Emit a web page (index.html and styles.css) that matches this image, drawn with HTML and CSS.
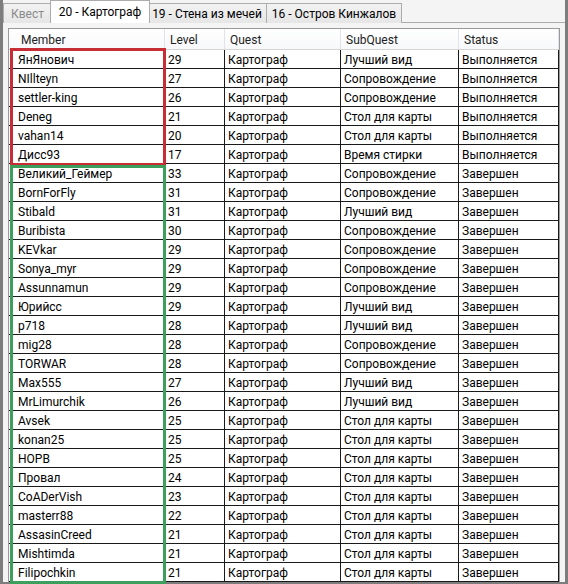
FILE: index.html
```html
<!DOCTYPE html>
<html lang="ru">
<head>
<meta charset="utf-8">
<title>Квест</title>
<link rel="stylesheet" href="styles.css">
</head>
<body>
<div class="window">
  <div class="tabs">
    <div class="tab disabled">Квест</div>
    <div class="tab active">20 - Картограф</div>
    <div class="tab t19">19 - Стена из мечей</div>
    <div class="tab t16">16 - Остров Кинжалов</div>
  </div>
  <div class="panel">
    <div class="grid">
      <div class="row head">
        <div class="cell first">Member</div>
        <div class="cell">Level</div>
        <div class="cell">Quest</div>
        <div class="cell">SubQuest</div>
        <div class="cell">Status</div>
      </div>
      <div class="body">
        <div class="row"><div class="cell first">ЯнЯнович</div><div class="cell">29</div><div class="cell">Картограф</div><div class="cell">Лучший вид</div><div class="cell">Выполняется</div></div>
        <div class="row"><div class="cell first">NIllteyn</div><div class="cell">27</div><div class="cell">Картограф</div><div class="cell">Сопровождение</div><div class="cell">Выполняется</div></div>
        <div class="row"><div class="cell first">settler-king</div><div class="cell">26</div><div class="cell">Картограф</div><div class="cell">Сопровождение</div><div class="cell">Выполняется</div></div>
        <div class="row"><div class="cell first">Deneg</div><div class="cell">21</div><div class="cell">Картограф</div><div class="cell">Стол для карты</div><div class="cell">Выполняется</div></div>
        <div class="row"><div class="cell first">vahan14</div><div class="cell">20</div><div class="cell">Картограф</div><div class="cell">Стол для карты</div><div class="cell">Выполняется</div></div>
        <div class="row"><div class="cell first">Дисс93</div><div class="cell">17</div><div class="cell">Картограф</div><div class="cell">Время стирки</div><div class="cell">Выполняется</div></div>
        <div class="row"><div class="cell first">Великий_Геймер</div><div class="cell">33</div><div class="cell">Картограф</div><div class="cell">Сопровождение</div><div class="cell">Завершен</div></div>
        <div class="row"><div class="cell first">BornForFly</div><div class="cell">31</div><div class="cell">Картограф</div><div class="cell">Сопровождение</div><div class="cell">Завершен</div></div>
        <div class="row"><div class="cell first">Stibald</div><div class="cell">31</div><div class="cell">Картограф</div><div class="cell">Лучший вид</div><div class="cell">Завершен</div></div>
        <div class="row"><div class="cell first">Buribista</div><div class="cell">30</div><div class="cell">Картограф</div><div class="cell">Сопровождение</div><div class="cell">Завершен</div></div>
        <div class="row"><div class="cell first">KEVkar</div><div class="cell">29</div><div class="cell">Картограф</div><div class="cell">Сопровождение</div><div class="cell">Завершен</div></div>
        <div class="row"><div class="cell first">Sonya_myr</div><div class="cell">29</div><div class="cell">Картограф</div><div class="cell">Сопровождение</div><div class="cell">Завершен</div></div>
        <div class="row"><div class="cell first">Assunnamun</div><div class="cell">29</div><div class="cell">Картограф</div><div class="cell">Сопровождение</div><div class="cell">Завершен</div></div>
        <div class="row"><div class="cell first">Юрийсс</div><div class="cell">29</div><div class="cell">Картограф</div><div class="cell">Лучший вид</div><div class="cell">Завершен</div></div>
        <div class="row"><div class="cell first">p718</div><div class="cell">28</div><div class="cell">Картограф</div><div class="cell">Лучший вид</div><div class="cell">Завершен</div></div>
        <div class="row"><div class="cell first">mig28</div><div class="cell">28</div><div class="cell">Картограф</div><div class="cell">Сопровождение</div><div class="cell">Завершен</div></div>
        <div class="row"><div class="cell first">TORWAR</div><div class="cell">28</div><div class="cell">Картограф</div><div class="cell">Сопровождение</div><div class="cell">Завершен</div></div>
        <div class="row"><div class="cell first">Max555</div><div class="cell">27</div><div class="cell">Картограф</div><div class="cell">Лучший вид</div><div class="cell">Завершен</div></div>
        <div class="row"><div class="cell first">MrLimurchik</div><div class="cell">26</div><div class="cell">Картограф</div><div class="cell">Лучший вид</div><div class="cell">Завершен</div></div>
        <div class="row"><div class="cell first">Avsek</div><div class="cell">25</div><div class="cell">Картограф</div><div class="cell">Стол для карты</div><div class="cell">Завершен</div></div>
        <div class="row"><div class="cell first">konan25</div><div class="cell">25</div><div class="cell">Картограф</div><div class="cell">Стол для карты</div><div class="cell">Завершен</div></div>
        <div class="row"><div class="cell first">HOPB</div><div class="cell">25</div><div class="cell">Картограф</div><div class="cell">Стол для карты</div><div class="cell">Завершен</div></div>
        <div class="row"><div class="cell first">Провал</div><div class="cell">24</div><div class="cell">Картограф</div><div class="cell">Стол для карты</div><div class="cell">Завершен</div></div>
        <div class="row"><div class="cell first">CoADerVish</div><div class="cell">23</div><div class="cell">Картограф</div><div class="cell">Стол для карты</div><div class="cell">Завершен</div></div>
        <div class="row"><div class="cell first">masterr88</div><div class="cell">22</div><div class="cell">Картограф</div><div class="cell">Стол для карты</div><div class="cell">Завершен</div></div>
        <div class="row"><div class="cell first">AssasinCreed</div><div class="cell">21</div><div class="cell">Картограф</div><div class="cell">Стол для карты</div><div class="cell">Завершен</div></div>
        <div class="row"><div class="cell first">Mishtimda</div><div class="cell">21</div><div class="cell">Картограф</div><div class="cell">Стол для карты</div><div class="cell">Завершен</div></div>
        <div class="row"><div class="cell first">Filipochkin</div><div class="cell">21</div><div class="cell">Картограф</div><div class="cell">Стол для карты</div><div class="cell">Завершен</div></div>
        <div class="mark red"></div>
        <div class="mark green"></div>
      </div>
    </div>
  </div>
</div>
</body>
</html>
```
FILE: styles.css
```css
* { box-sizing: border-box; }
html, body { margin: 0; padding: 0; }
body {
  width: 568px;
  height: 584px;
  overflow: hidden;
  background: #7d7d7d;
  font-family: Roboto, "Noto Sans", sans-serif;
  font-size: 12px;
  color: #000;
}
.window {
  margin-left: 3px;
  width: 562px;
  height: 582px;
  background: #f4f4f4;
  display: flex;
  flex-direction: column;
}
.tabs {
  display: flex;
  align-items: flex-end;
  height: 23px;
  position: relative;
  z-index: 1;
  font-size: 12px;
}
.tab {
  flex: none;
  height: 20px;
  line-height: 21px;
  text-align: center;
  border: 1px solid #acacac;
  border-bottom: none;
  border-left: none;
  background: linear-gradient(#f2f2f2, #e6e6e6);
  white-space: nowrap;
  overflow: hidden;
}
.tab:first-child { border-left: 1px solid #acacac; }
.tab.disabled { color: #8a8a8a; width: 49px; }
.tab.active {
  height: 23px;
  line-height: 23px;
  width: 100px;
  background: #fff;
  margin-left: -2px;
  margin-right: -2px;
  border-left: 1px solid #acacac;
  position: relative;
}
.tab.t19 { width: 119px; }
.tab.t16 { width: 135px; }
.panel {
  flex: 1;
  border-top: 1px solid #acacac;
  padding: 5px 0 0 5px;
  margin-top: -1px;
  background: #f4f4f4;
}
.grid {
  width: 552px;
  border: 1px solid #9a9a9a;
  border-bottom: none;
  background: #fff;
}
.row {
  display: grid;
  grid-template-columns: 156px 60px 116px 118px 100px;
  height: 19px;
  border-bottom: 1px solid #1a1a1a;
}
.row .cell {
  border-right: 1px solid #1a1a1a;
  padding-left: 3px;
  line-height: 21px;
  white-space: nowrap;
  overflow: hidden;
}
.row .cell.first { padding-left: 9px; }
.row.head {
  height: 21px;
  border-bottom: 1px solid #d5d5d5;
  background: linear-gradient(#ffffff, #f7f8fa);
  color: #222;
}
.row.head .cell {
  border-right: 1px solid #e2e3ea;
  padding-left: 5px;
  line-height: 23px;
}
.row.head .cell.first { padding-left: 12px; }
.body { position: relative; }
.mark {
  position: absolute;
  left: 1px;
  width: 156px;
  border: 3px solid;
  pointer-events: none;
}
.mark.red {
  top: -2px;
  height: 118px;
  border-color: #c62d35;
}
.mark.green {
  top: 115px;
  height: 419px;
  border-color: #3c9f5b;
}
```
